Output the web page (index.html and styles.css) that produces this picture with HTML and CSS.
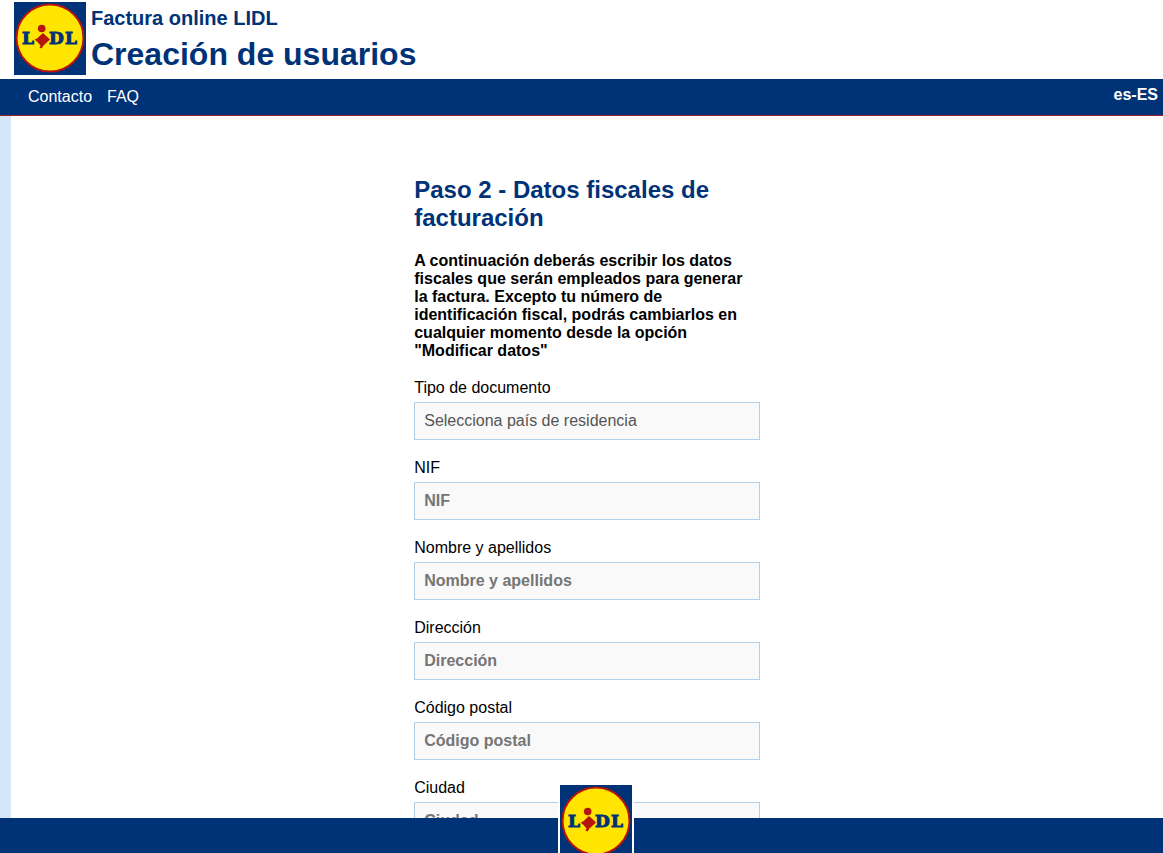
FILE: index.html
```html
<!DOCTYPE html>
<html lang="es">
<head>
    <meta charset="UTF-8">
    <meta name="viewport" content="width=device-width, initial-scale=1.0">
    <title>Factura online LIDL</title>
    <link rel="stylesheet" href="styles.css">
</head>
<body>
    <header class="header">
        <svg class="logo" viewBox="0 0 72 73" role="img" aria-label="LIDL">
            <rect width="72" height="73" fill="#003278"/>
            <circle cx="36" cy="36" r="33.500" fill="#ffe500" stroke="#b5150b" stroke-width="2"/>
            <g class="logo-text">
                <text x="8" y="42">L</text>
                <text x="35" y="42">D</text>
                <text x="51" y="42">L</text>
            </g>
            <circle cx="27.700" cy="26.500" r="3.800" fill="#b5150b"/>
            <path d="M20.500 37.500l2.500-1 6-5.500 7 6.500-6.500 6-2 3-2-1 1-2-3-3.500z" fill="#b5150b"/>
        </svg>
        <div class="titles">
            <h3>Factura online LIDL</h3>
            <h1>Creación de usuarios</h1>
        </div>
    </header>
    <nav class="navbar">
        <a href="#contacto">Contacto</a>
        <a href="#faq">FAQ</a>
        <a class="lang" href="#idioma">es-ES</a>
    </nav>
    <main class="content">
        <form class="form">
            <h2>Paso 2 - Datos fiscales de facturación</h2>
            <p>A continuación deberás escribir los datos fiscales que serán empleados para generar la factura. Excepto tu número de identificación fiscal, podrás cambiarlos en cualquier momento desde la opción "Modificar datos"</p>

            <label for="tipo">Tipo de documento</label>
            <select id="tipo">
                <option>Selecciona país de residencia</option>
            </select>

            <label for="nif">NIF</label>
            <input type="text" id="nif" placeholder="NIF">

            <label for="nombre">Nombre y apellidos</label>
            <input type="text" id="nombre" placeholder="Nombre y apellidos">

            <label for="direccion">Dirección</label>
            <input type="text" id="direccion" placeholder="Dirección">

            <label for="cp">Código postal</label>
            <input type="text" id="cp" placeholder="Código postal">

            <label for="ciudad">Ciudad</label>
            <input type="text" id="ciudad" placeholder="Ciudad">
        </form>
    </main>
    <footer class="footer">
        <svg class="logo footer-logo" viewBox="0 0 72 73" role="img" aria-label="LIDL">
            <rect width="72" height="73" fill="#003278"/>
            <circle cx="36" cy="36" r="33.500" fill="#ffe500" stroke="#b5150b" stroke-width="2"/>
            <g class="logo-text">
                <text x="8" y="42">L</text>
                <text x="35" y="42">D</text>
                <text x="51" y="42">L</text>
            </g>
            <circle cx="27.700" cy="26.500" r="3.800" fill="#b5150b"/>
            <path d="M20.500 37.500l2.500-1 6-5.500 7 6.500-6.500 6-2 3-2-1 1-2-3-3.500z" fill="#b5150b"/>
        </svg>
    </footer>
</body>
</html>
```
FILE: styles.css
```css
* {
    box-sizing: border-box;
}
body {
    font-family: "Liberation Sans", Arial, sans-serif;
    font-size: 16px;
    line-height: 18px;
    margin: 0;
    color: #000;
    background: #fff;
}
h1, h2, h3, p {
    margin: 0;
}
h1, h2, h3 {
    color: #003278;
}

/* header */
.header {
    display: flex;
    gap: 5px;
    padding: 2px 14px 1px;
}
.logo {
    display: block;
    width: 72px;
    height: 73px;
    flex: none;
}
.logo-text {
    font-family: "DejaVu Serif", serif;
    font-size: 17px;
    font-weight: bold;
    fill: #003278;
    stroke: #003278;
    stroke-width: 1px;
}
.titles {
    padding-top: 4px;
}
h3 {
    font-size: 20px;
    line-height: 24px;
}
h1 {
    font-size: 32px;
    line-height: 48px;
}

/* menu */
.navbar {
    display: flex;
    gap: 15px;
    padding: 9px 5px 9px 28px;
    background: #003278;
    border-bottom: 1px solid #a0202c;
}
.navbar a {
    color: #fff;
    text-decoration: none;
}
.navbar .lang {
    margin-left: auto;
    margin-top: -2px;
    font-weight: bold;
}

/* form */
.content {
    padding: 60px 0 80px;
    border-left: 11px solid #d4e6f8;
}
.form {
    width: 30%;
    min-width: 280px;
    margin: 0 auto;
}
h2 {
    font-size: 24px;
    line-height: 28px;
    margin-bottom: 20px;
}
p {
    font-weight: bold;
    margin-bottom: 19px;
}
label {
    display: block;
    margin-bottom: 5px;
}
input, select {
    display: block;
    width: 100%;
    height: 38px;
    margin-bottom: 19px;
    padding: 0 9px;
    border: 1px solid #b4cfe8;
    border-radius: 0;
    background: #f9f9f9;
    font: inherit;
    color: #555;
    appearance: none;
}
input {
    font-weight: bold;
}
input::placeholder {
    color: #757575;
}

/* footer */
.footer {
    position: fixed;
    left: 0;
    bottom: 0;
    width: 100%;
    height: 35px;
    background: #003278;
}
.footer-logo {
    position: absolute;
    left: 48%;
    top: -35px;
    width: 76px;
    height: 77px;
    border: 2px solid #fff;
}
```
